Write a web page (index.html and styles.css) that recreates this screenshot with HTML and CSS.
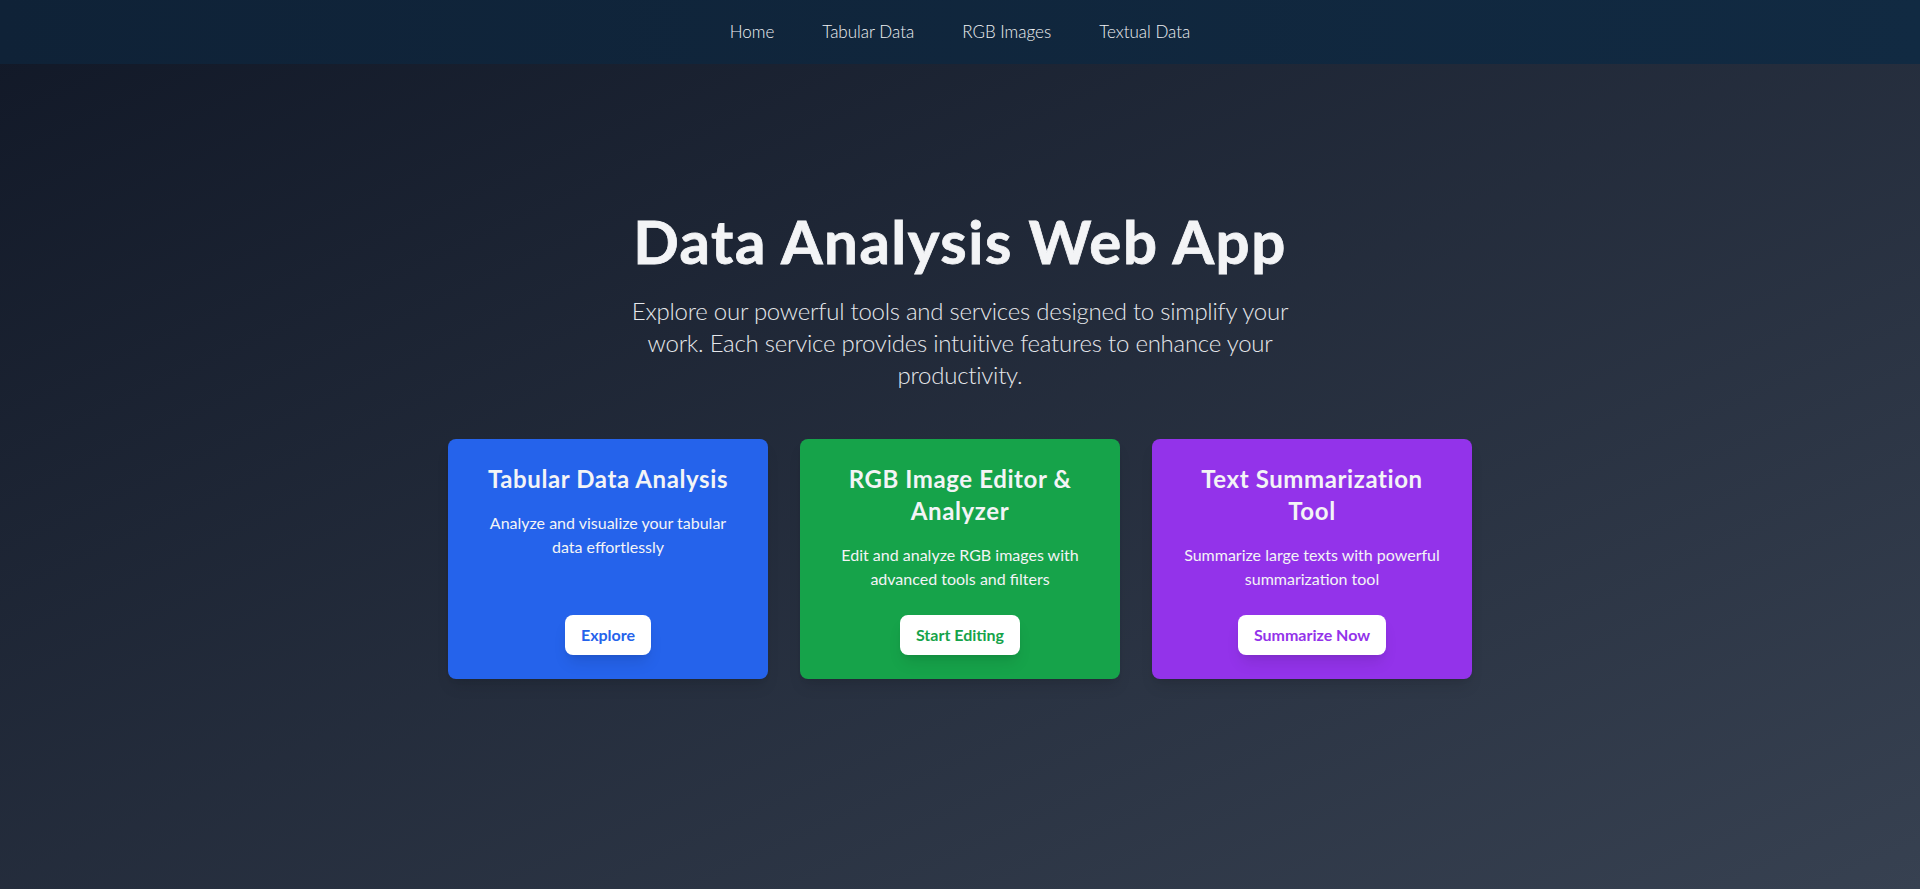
FILE: index.html
```html
<!DOCTYPE html>
<html lang="en">
<head>
<meta charset="utf-8">
<title>Data Analysis Web App</title>
<link rel="stylesheet" href="styles.css">
</head>
<body>
<nav class="topnav">
  <ul class="nav-list">
    <li><a class="nav-link" href="#">Home</a></li>
    <li><a class="nav-link" href="#">Tabular Data</a></li>
    <li><a class="nav-link" href="#">RGB Images</a></li>
    <li><a class="nav-link" href="#">Textual Data</a></li>
  </ul>
</nav>
<main class="hero">
  <div class="hero-inner">
    <h1 class="hero-title">Data Analysis Web App</h1>
    <p class="hero-sub">Explore our powerful tools and services designed to simplify your work. Each service provides intuitive features to enhance your productivity.</p>
    <div class="cards">
      <div class="card card-blue">
        <div class="card-body">
          <h2 class="card-title">Tabular Data Analysis</h2>
          <p class="card-text">Analyze and visualize your tabular data effortlessly</p>
        </div>
        <a class="card-btn" href="#">Explore</a>
      </div>
      <div class="card card-green">
        <div class="card-body">
          <h2 class="card-title">RGB Image Editor &amp; Analyzer</h2>
          <p class="card-text">Edit and analyze RGB images with advanced tools and filters</p>
        </div>
        <a class="card-btn" href="#">Start Editing</a>
      </div>
      <div class="card card-purple">
        <div class="card-body">
          <h2 class="card-title">Text Summarization Tool</h2>
          <p class="card-text">Summarize large texts with powerful summarization tool</p>
        </div>
        <a class="card-btn" href="#">Summarize Now</a>
      </div>
    </div>
  </div>
</main>
</body>
</html>
```

FILE: styles.css
```css
* { box-sizing: border-box; }
html, body { margin: 0; padding: 0; }
body {
  font-family: Lato, "Open Sans", sans-serif;
  color: #f3f4f6;
  background: linear-gradient(to bottom right, #111827, #374151);
  min-height: 100vh;
}
.topnav {
  position: fixed;
  top: 0; left: 0; right: 0;
  height: 64px;
  background: linear-gradient(to right, #0f2237, #112a42);
  display: flex;
  align-items: center;
  justify-content: center;
  z-index: 10;
}
.nav-list {
  list-style: none;
  margin: 0; padding: 0;
  display: flex;
  gap: 48px;
}
.nav-link {
  color: #eef0f3;
  text-decoration: none;
  font-size: 17px;
  font-weight: 300;
  line-height: 28px;
}
.hero {
  min-height: 100vh;
  display: flex;
  align-items: center;
  justify-content: center;
  text-align: center;
}
.hero-inner {
  width: 1024px;
}
.hero-title {
  margin: 0 0 24px;
  font-size: 60px;
  line-height: 60px;
  font-weight: 700;
  letter-spacing: 1.5px;
  color: #f3f4f6;
  -webkit-text-stroke: 0.8px #f3f4f6;
}
.hero-sub {
  margin: 0 auto;
  max-width: 690px;
  font-size: 24px;
  line-height: 32px;
  font-weight: 300;
  letter-spacing: -0.25px;
  color: #e5e7eb;
}
.cards {
  margin-top: 48px;
  display: grid;
  grid-template-columns: repeat(3, 1fr);
  gap: 32px;
}
.card {
  border-radius: 8px;
  padding: 24px;
  display: flex;
  flex-direction: column;
  align-items: center;
  justify-content: space-between;
  box-shadow: 0 10px 15px -3px rgba(0,0,0,0.1), 0 4px 6px -4px rgba(0,0,0,0.1);
}
.card-blue { background: #2563eb; --accent: #2563eb; }
.card-green { background: #16a34a; --accent: #16a34a; }
.card-purple { background: #9333ea; --accent: #9333ea; }
.card-title {
  margin: 0 0 16px;
  font-size: 24px;
  line-height: 32px;
  font-weight: 700;
  letter-spacing: 0.6px;
  color: #f3f4f6;
}
.card-text {
  margin: 0 0 24px;
  padding: 0 4px;
  font-size: 16px;
  line-height: 24px;
  color: #f3f4f6;
}
.card-btn {
  display: inline-block;
  background: #ffffff;
  color: var(--accent);
  text-decoration: none;
  font-size: 16px;
  line-height: 24px;
  font-weight: 700;
  padding: 8px 16px;
  border-radius: 8px;
  box-shadow: 0 10px 15px -3px rgba(0,0,0,0.1), 0 4px 6px -4px rgba(0,0,0,0.1);
}
```
